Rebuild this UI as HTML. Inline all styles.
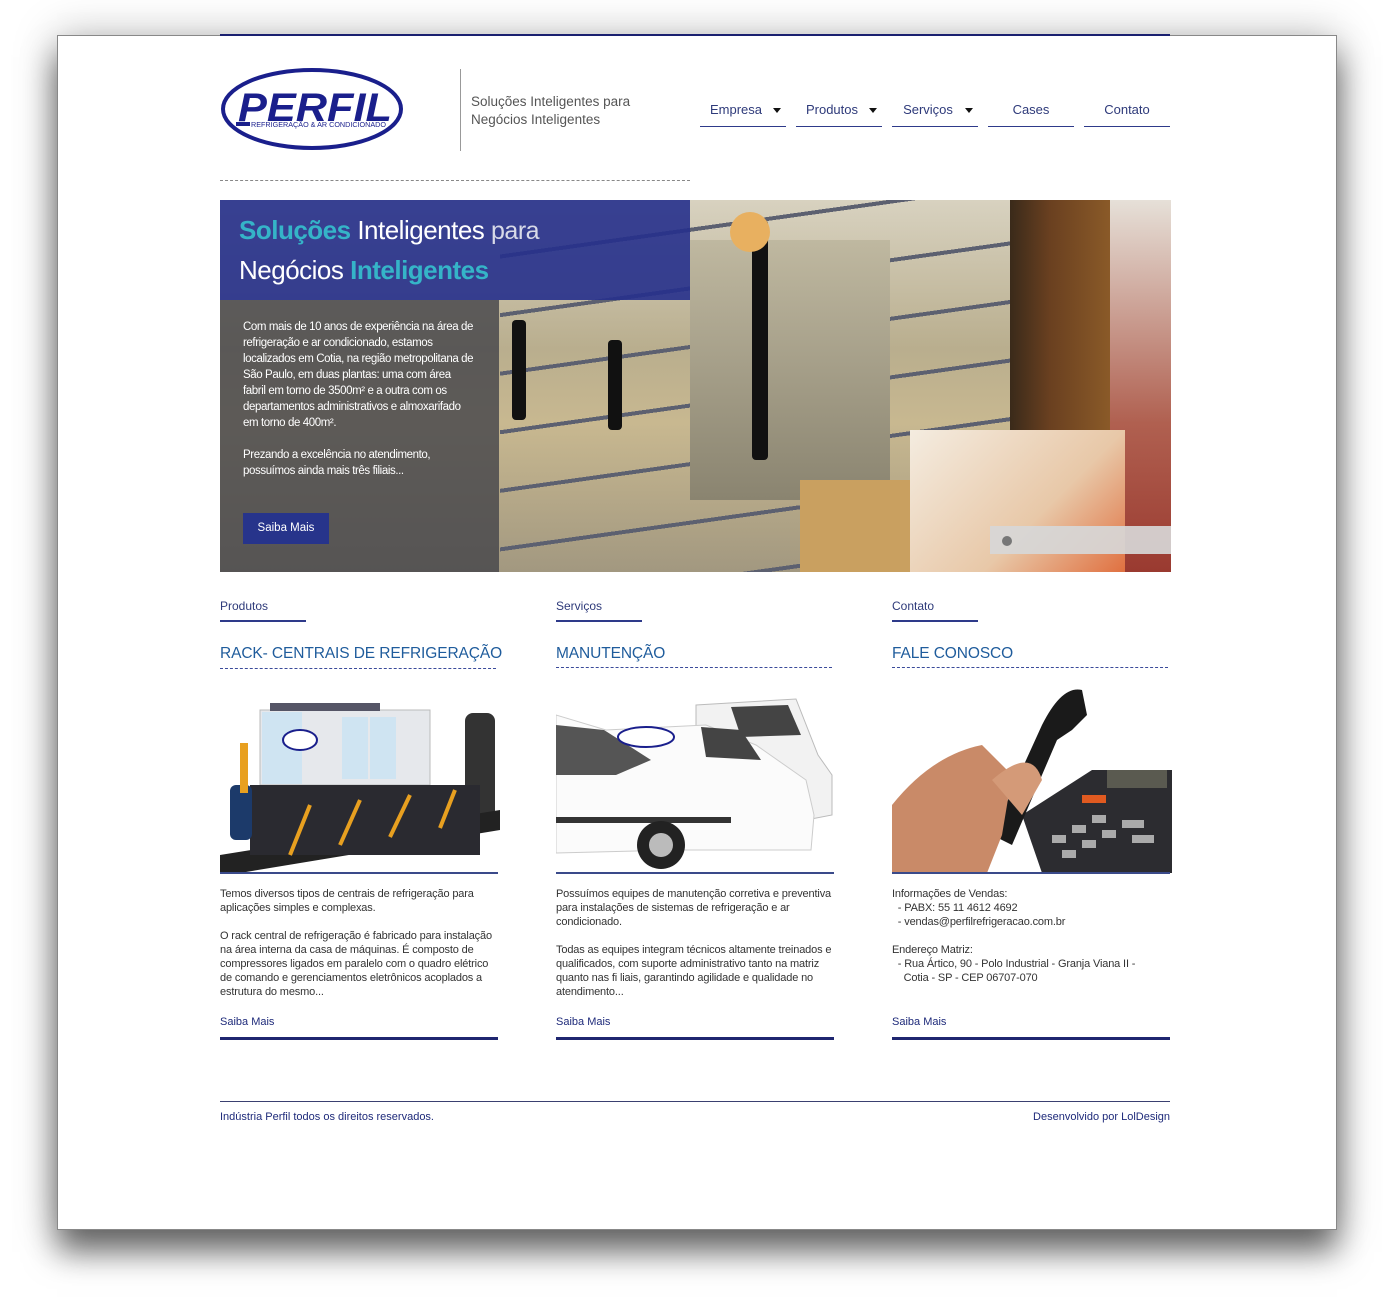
<!DOCTYPE html>
<html><head><meta charset="utf-8">
<style>
*{margin:0;padding:0;box-sizing:border-box}
body{width:1394px;height:1302px;background:#fff;position:relative;overflow:hidden;font-family:"Liberation Sans",sans-serif}
.a{position:absolute}
#page{position:absolute;left:57px;top:35px;width:1280px;height:1195px;background:#fff;border:1px solid #888;box-shadow:0 22px 30px rgba(0,0,0,.55),0 0 40px rgba(0,0,0,.25)}
.nav{position:absolute;top:101px;width:86px;height:26px;border-bottom:1.5px solid #2e3a8a;color:#2e3a7a;font-size:13px;text-align:center}
.nav .t{position:absolute;top:1px;left:0;right:0}
.tri{position:absolute;top:7px;width:0;height:0;border-left:4px solid transparent;border-right:4px solid transparent;border-top:5px solid #111}
.lab{font-size:12px;color:#2e3a7a}
.lu{height:1.5px;width:86px;background:#2e3a8a}
.h{font-size:15.5px;color:#1f5c9c;letter-spacing:-.1px}
.dash{height:0;border-top:1.5px dashed #3a4a9a}
.p{font-size:11px;line-height:14px;color:#333;letter-spacing:-.15px}
.sm{font-size:11px;color:#1e2a7a}
.bar{height:3px;background:#1f2670;width:278px}
</style></head><body>
<div id="page"></div>
<div class="a" style="left:220px;top:34px;width:950px;height:2px;background:#1a2070"></div>

<svg class="a" style="left:218px;top:66px" width="188" height="88" viewBox="0 0 188 88">
<ellipse cx="94" cy="43" rx="89" ry="39" fill="#fff" stroke="#1a1f8c" stroke-width="4"/>
<text x="97" y="55" text-anchor="middle" font-family="Liberation Sans" font-weight="bold" font-style="italic" font-size="40" fill="#1a1f8c" textLength="154" lengthAdjust="spacingAndGlyphs">PERFIL</text>
<rect x="18" y="56" width="14" height="4" fill="#1a1f8c"/>
<text x="33" y="61" font-family="Liberation Sans" font-size="7" fill="#1a1f8c" textLength="135" lengthAdjust="spacingAndGlyphs">REFRIGERAÇÃO &amp; AR CONDICIONADO</text>
</svg>
<div class="a" style="left:460px;top:69px;width:1px;height:82px;background:#999"></div>
<div class="a" style="left:471px;top:93px;font-size:13.5px;line-height:18px;color:#555">Soluções Inteligentes para<br>Negócios Inteligentes</div>

<div class="nav" style="left:700px"><span class="t" style="left:-14px">Empresa</span><i class="tri" style="left:73px"></i></div>
<div class="nav" style="left:796px"><span class="t" style="left:-14px">Produtos</span><i class="tri" style="left:73px"></i></div>
<div class="nav" style="left:892px"><span class="t" style="left:-14px">Serviços</span><i class="tri" style="left:73px"></i></div>
<div class="nav" style="left:988px"><span class="t">Cases</span></div>
<div class="nav" style="left:1084px"><span class="t">Contato</span></div>

<div class="a dash" style="left:220px;top:180px;width:470px;border-top:1px dashed #888"></div>

<div class="a" style="left:220px;top:200px;width:951px;height:372px;overflow:hidden;background:#8a8270">
 <div class="a" style="left:0;top:0;width:951px;height:372px;background:linear-gradient(180deg,#d8d2c0 0%,#b9ae8e 40%,#c8b890 60%,#a29880 100%)"></div>
 <div class="a" style="left:280px;top:0;width:600px;height:372px;background:repeating-linear-gradient(172deg,transparent 0 54px,#5c6070 54px 58px)"></div>
 <div class="a" style="left:470px;top:40px;width:200px;height:260px;background:linear-gradient(#bfb8a0,#8a8470)"></div>
 <div class="a" style="left:580px;top:280px;width:150px;height:92px;background:#c9a060"></div>
 <div class="a" style="left:790px;top:0;width:100px;height:340px;background:linear-gradient(90deg,#3a2a1a,#6a4020 40%,#8a5a28)"></div>
 <div class="a" style="left:890px;top:0;width:61px;height:372px;background:linear-gradient(#e6e0d8,#b06050 60%,#9a3a30)"></div>
 <div class="a" style="left:690px;top:230px;width:215px;height:142px;background:linear-gradient(135deg,#f4ece0,#e8c8a8 60%,#e07040)"></div>
 <div class="a" style="left:292px;top:120px;width:14px;height:100px;background:#111;border-radius:4px"></div>
 <div class="a" style="left:388px;top:140px;width:14px;height:90px;background:#111;border-radius:4px"></div>
 <div class="a" style="left:532px;top:20px;width:16px;height:240px;background:#111;border-radius:4px"></div>
 <div class="a" style="left:510px;top:12px;width:40px;height:40px;border-radius:50%;background:#e8b060"></div>
 <div class="a" style="left:0;top:100px;width:279px;height:272px;background:rgba(70,70,75,.82)"></div>
 <div class="a" style="left:0;top:0;width:470px;height:100px;background:rgba(38,48,140,.9)"></div>
 <div class="a" style="left:19px;top:11px;font-size:26px;color:#fff;line-height:39px;letter-spacing:-.5px">
  <span style="color:#35b4c8;font-weight:bold">Soluções</span> Inteligentes <span style="color:#d8dae8;font-size:25px">para</span><br>Negócios <span style="color:#35b4c8;font-weight:bold">Inteligentes</span></div>
 <div class="a" style="left:23px;top:119px;width:232px;font-size:11.5px;line-height:16px;color:#fff;letter-spacing:-.4px">Com mais de 10 anos de experiência na área de refrigeração e ar condicionado, estamos localizados em Cotia, na região metropolitana de São Paulo, em duas plantas: uma com área fabril em torno de 3500m² e a outra com os departamentos administrativos e almoxarifado em torno de 400m².<br><br>Prezando a excelência no atendimento, possuímos ainda mais três filiais...</div>
 <div class="a" style="left:23px;top:313px;width:86px;height:31px;background:#27348b;color:#fff;font-size:11.5px;line-height:31px;text-align:center">Saiba Mais</div>
 <div class="a" style="left:770px;top:326px;width:181px;height:28px;background:rgba(215,215,215,.92)"></div>
 <div class="a" style="left:782px;top:336px;width:10px;height:10px;border-radius:50%;background:#777"></div>
</div>

<div class="a lab" style="left:220px;top:599px">Produtos</div><div class="a lu" style="left:220px;top:620px"></div>
<div class="a lab" style="left:556px;top:599px">Serviços</div><div class="a lu" style="left:556px;top:620px"></div>
<div class="a lab" style="left:892px;top:599px">Contato</div><div class="a lu" style="left:892px;top:620px"></div>

<div class="a h" style="left:220px;top:645px">RACK- CENTRAIS DE REFRIGERAÇÃO</div>
<div class="a dash" style="left:220px;top:668px;width:276px"></div>
<div class="a h" style="left:556px;top:645px">MANUTENÇÃO</div>
<div class="a dash" style="left:556px;top:667px;width:276px"></div>
<div class="a h" style="left:892px;top:645px">FALE CONOSCO</div>
<div class="a dash" style="left:892px;top:667px;width:276px"></div>

<svg class="a" style="left:220px;top:685px" width="280" height="188" viewBox="0 0 280 188">
<rect x="40" y="25" width="170" height="75" fill="#e6e8ec" stroke="#bbb"/>
<rect x="42" y="27" width="40" height="72" fill="#cfe4f2"/>
<rect x="122" y="32" width="26" height="62" fill="#cfe4f2"/>
<rect x="150" y="32" width="26" height="62" fill="#cfe4f2"/>
<ellipse cx="80" cy="55" rx="17" ry="10" fill="#fff" stroke="#1a1f8c" stroke-width="2"/>
<rect x="50" y="18" width="110" height="8" fill="#556"/>
<rect x="245" y="28" width="30" height="110" rx="8" fill="#333"/>
<polygon points="0,170 280,125 280,145 20,188 0,188" fill="#222"/>
<rect x="30" y="100" width="230" height="70" fill="#2a2a30"/>
<rect x="10" y="100" width="22" height="55" rx="6" fill="#1c3a6a"/>
<g stroke="#e8a020" stroke-width="4"><line x1="70" y1="170" x2="90" y2="120"/><line x1="120" y1="160" x2="140" y2="115"/><line x1="170" y1="152" x2="190" y2="110"/><line x1="220" y1="143" x2="235" y2="105"/></g>
<rect x="20" y="58" width="8" height="50" fill="#e8a020"/>
</svg>
<div class="a" style="left:220px;top:872px;width:278px;height:1.5px;background:#3a4a8a"></div>

<svg class="a" style="left:556px;top:685px" width="280" height="188" viewBox="0 0 280 188">
<path d="M140 20 L240 14 L262 70 L276 90 L276 130 L250 135 L140 135 Z" fill="#f2f2f2" stroke="#bbb"/>
<path d="M175 22 L232 20 L245 50 L185 52 Z" fill="#444"/>
<circle cx="235" cy="120" r="18" fill="#222"/><circle cx="235" cy="120" r="9" fill="#bbb"/>
<path d="M50 45 L150 40 L200 60 L250 95 L258 130 L255 165 L120 165 L0 168 L0 30 Z" fill="#fbfbfb" stroke="#ccc"/>
<path d="M0 40 L48 45 L95 75 L60 90 L0 90 Z" fill="#555"/>
<path d="M145 42 L185 45 L205 75 L150 72 Z" fill="#444"/>
<ellipse cx="90" cy="52" rx="28" ry="10" fill="#fff" stroke="#1a1f8c" stroke-width="2"/>
<rect x="0" y="132" width="175" height="6" fill="#333"/>
<circle cx="105" cy="160" r="24" fill="#222"/><circle cx="105" cy="160" r="12" fill="#bbb"/>
</svg>
<div class="a" style="left:556px;top:872px;width:278px;height:1.5px;background:#3a4a8a"></div>

<svg class="a" style="left:892px;top:685px" width="280" height="188" viewBox="0 0 280 188">
<path d="M130 130 L200 85 L280 85 L280 188 L150 188 Z" fill="#2c2c30"/>
<rect x="215" y="85" width="60" height="18" fill="#5a5a50"/>
<g fill="#aaa"><rect x="160" y="150" width="14" height="8"/><rect x="180" y="140" width="14" height="8"/><rect x="200" y="130" width="14" height="8"/><rect x="170" y="165" width="14" height="8"/><rect x="190" y="155" width="14" height="8"/><rect x="210" y="145" width="14" height="8"/><rect x="230" y="135" width="22" height="8"/><rect x="240" y="150" width="22" height="8"/></g>
<rect x="190" y="110" width="24" height="8" fill="#e05a20"/>
<path d="M100 150 L150 40 Q170 0 190 5 L195 30 L180 45 L165 55 L120 160 Z" fill="#1a1a1a"/>
<path d="M0 120 Q40 70 90 60 L120 90 L110 150 L95 188 L0 188 Z" fill="#c98a68"/>
<path d="M100 95 Q140 60 150 95 L130 130 Z" fill="#d49a78"/>
</svg>
<div class="a" style="left:892px;top:872px;width:278px;height:1.5px;background:#3a4a8a"></div>

<div class="a p" style="left:220px;top:887px;width:272px">Temos diversos tipos de centrais de refrigeração para aplicações simples e complexas.<br><br>O rack central de refrigeração é fabricado para instalação na área interna da casa de máquinas. É composto de compressores ligados em paralelo com o quadro elétrico de comando e gerenciamentos eletrônicos acoplados a estrutura do mesmo...</div>
<div class="a p" style="left:556px;top:887px;width:276px">Possuímos equipes de manutenção corretiva e preventiva para instalações de sistemas de refrigeração e ar condicionado.<br><br>Todas as equipes integram técnicos altamente treinados e qualificados, com suporte administrativo tanto na matriz quanto nas fi liais, garantindo agilidade e qualidade no atendimento...</div>
<div class="a p" style="left:892px;top:887px;width:285px">Informações de Vendas:<br>&nbsp;&nbsp;- PABX: 55 11 4612 4692<br>&nbsp;&nbsp;- vendas@perfilrefrigeracao.com.br<br><br>Endereço Matriz:<br>&nbsp;&nbsp;- Rua Ártico, 90 - Polo Industrial - Granja Viana II -<br>&nbsp;&nbsp;&nbsp;&nbsp;Cotia - SP - CEP 06707-070</div>

<div class="a sm" style="left:220px;top:1016px">Saiba Mais</div><div class="a bar" style="left:220px;top:1037px"></div>
<div class="a sm" style="left:556px;top:1016px">Saiba Mais</div><div class="a bar" style="left:556px;top:1037px"></div>
<div class="a sm" style="left:892px;top:1016px">Saiba Mais</div><div class="a bar" style="left:892px;top:1037px"></div>

<div class="a" style="left:220px;top:1101px;width:950px;height:1px;background:#3a4070"></div>
<div class="a sm" style="left:220px;top:1111px">Indústria Perfil todos os direitos reservados.</div>
<div class="a sm" style="left:1020px;top:1111px;width:150px;text-align:right">Desenvolvido por LolDesign</div>
</body></html>
